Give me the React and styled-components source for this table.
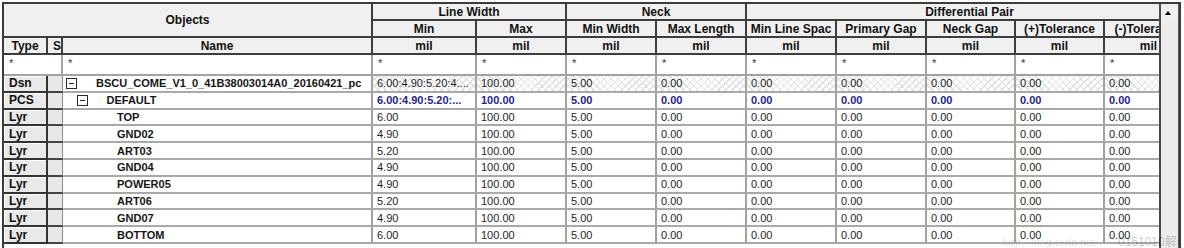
import React from 'react';
import styled, { createGlobalStyle } from 'styled-components';

const GlobalStyle = createGlobalStyle`
  body {
    margin: 0;
    background: #ffffff;
    font-family: "Liberation Sans", Arial, sans-serif;
  }
`;

const Frame = styled.div`
  position: relative;
  margin: 2px 0 0 2px;
  width: 1179px;
  height: 246px;
  box-sizing: border-box;
  border: 2px solid #3c3c3c;
  border-bottom: none;
  display: flex;
  background: #fff;
  overflow: hidden;
`;

const Viewport = styled.div`
  width: 1155px;
  flex: none;
  overflow: hidden;
`;

const Grid = styled.div`
  display: grid;
  grid-template-columns: 44px 15px 310px 104px 90px 90px 90px 90px 90px 89px 89px 89px;
  grid-template-rows: 17px 17px 17px 21px repeat(10, 16.8px);
  width: max-content;
  color: #1a1a1a;
`;

const HeadCell = styled.div`
  grid-column: span ${p => p.$span || 1};
  grid-row: span ${p => p.$rows || 1};
  box-sizing: border-box;
  background: #f0f0f0;
  border-right: 2px solid #3d3d3d;
  border-bottom: 2px solid #3d3d3d;
  font-size: 12px;
  font-weight: bold;
  color: #111;
  display: flex;
  align-items: center;
  justify-content: ${p => (p.$left ? 'flex-start' : 'center')};
  padding-left: ${p => (p.$left ? '5px' : '0')};
  white-space: nowrap;
  overflow: hidden;
`;

const FilterCell = styled.div`
  grid-column: span ${p => p.$span || 1};
  box-sizing: border-box;
  background: #fff;
  border-right: 2px solid #a2a2a2;
  border-bottom: 2px solid #a2a2a2;
  font-size: 11px;
  color: #333;
  padding: 3px 0 0 5px;
  line-height: 11px;
`;

const TypeCell = styled.div`
  box-sizing: border-box;
  background: #e9e9e9;
  border-right: 2px solid #333;
  border-bottom: 2px solid #333;
  box-shadow: inset 1px 1px 0 #ffffff;
  font-size: 12px;
  font-weight: bold;
  color: #111;
  display: flex;
  align-items: center;
  padding-left: 5px;
`;

const StateCell = styled.div`
  box-sizing: border-box;
  background: #e8e8e8;
  border-right: 1px solid #8c8c8c;
  border-bottom: 2px solid #444;
`;

const NameCell = styled.div`
  box-sizing: border-box;
  background: #fff;
  border-right: 2px solid #a2a2a2;
  border-bottom: 2px solid #a9a9a9;
  display: flex;
  align-items: center;
  padding-left: ${p => 3 + p.$level * 10.5}px;
  font-size: 11px;
  font-weight: bold;
  color: #161616;
  white-space: nowrap;
  overflow: hidden;
`;

const TreeSlot = styled.span`
  width: 30px;
  flex: none;
  display: flex;
  align-items: center;
`;

const TreeBox = styled.span`
  position: relative;
  width: 11px;
  height: 11px;
  box-sizing: border-box;
  border: 1px solid #2a2a2a;
  background: #fff;

  &::after {
    content: '';
    position: absolute;
    left: 2px;
    right: 2px;
    top: 4px;
    height: 1px;
    background: #222;
  }
`;

const ValueCell = styled.div`
  box-sizing: border-box;
  border-right: 2px solid #a2a2a2;
  border-bottom: 2px solid #a9a9a9;
  display: flex;
  align-items: center;
  padding-left: 4px;
  font-size: 11px;
  font-weight: ${p => (p.$strong ? 'bold' : 'normal')};
  color: ${p => (p.$strong ? '#25258f' : '#1e1e1e')};
  white-space: nowrap;
  overflow: hidden;
  background-color: #fff;
  background-image: ${p => (p.$hatch
    ? `repeating-linear-gradient(45deg, transparent 0 4px, #e0e0e0 4px 5px),
       repeating-linear-gradient(-45deg, transparent 0 4px, #e0e0e0 4px 5px)`
    : 'none')};
`;

const ScrollBar = styled.div`
  flex: 1;
  box-sizing: border-box;
  background: #ececec;
  border-left: 2px solid #4a4a4a;
  border-right: 1px solid #5a5a5a;
  display: flex;
  flex-direction: column;
`;

const ArrowButton = styled.div`
  height: 17px;
  display: flex;
  align-items: center;
  justify-content: center;
  padding-right: 3px;
  background: #efefef;

  &::before {
    content: '';
    border-left: 3px solid transparent;
    border-right: 3px solid transparent;
    border-bottom: 4px solid #000;
  }
`;

const Watermark = styled.div`
  position: absolute;
  left: 998px;
  top: 228px;
  font-family: "Liberation Serif", serif;
  font-size: 12px;
  color: rgba(0, 0, 0, 0.12);
  white-space: nowrap;
  pointer-events: none;

  span {
    color: rgba(0, 0, 0, 0.22);
    font-family: "Liberation Sans", "Noto Sans CJK SC", sans-serif;
    margin-left: 20px;
  }
`;

const subHeads = ['Min', 'Max', 'Min Width', 'Max Length', 'Min Line Spac', 'Primary Gap', 'Neck Gap', '(+)Tolerance', '(-)Tolerance'];

const zeros = ['0.00', '0.00', '0.00', '0.00', '0.00', '0.00'];

const rows = [
  { type: 'Dsn', level: 0, box: true, name: 'BSCU_COME_V1_0_41B38003014A0_20160421_pc', min: '6.00:4.90:5.20:4....', hatch: true },
  { type: 'PCS', level: 1, box: true, name: 'DEFAULT', min: '6.00:4.90:5.20:...', strong: true },
  { type: 'Lyr', level: 2, name: 'TOP', min: '6.00' },
  { type: 'Lyr', level: 2, name: 'GND02', min: '4.90' },
  { type: 'Lyr', level: 2, name: 'ART03', min: '5.20' },
  { type: 'Lyr', level: 2, name: 'GND04', min: '4.90' },
  { type: 'Lyr', level: 2, name: 'POWER05', min: '4.90' },
  { type: 'Lyr', level: 2, name: 'ART06', min: '5.20' },
  { type: 'Lyr', level: 2, name: 'GND07', min: '4.90' },
  { type: 'Lyr', level: 2, name: 'BOTTOM', min: '6.00' },
];

export default function App() {
  return (
    <>
      <GlobalStyle />
      <Frame>
        <Viewport>
          <Grid>
            <HeadCell $span={3} $rows={2}>Objects</HeadCell>
            <HeadCell $span={2}>Line Width</HeadCell>
            <HeadCell $span={2}>Neck</HeadCell>
            <HeadCell $span={5}>Differential Pair</HeadCell>
            {subHeads.map((h, i) => <HeadCell key={'s' + i}>{h}</HeadCell>)}

            <HeadCell>Type</HeadCell>
            <HeadCell $left>S</HeadCell>
            <HeadCell>Name</HeadCell>
            {subHeads.map((h, i) => <HeadCell key={'u' + i}>mil</HeadCell>)}

            <FilterCell $span={2}>*</FilterCell>
            <FilterCell>*</FilterCell>
            {subHeads.map((h, i) => <FilterCell key={'f' + i}>*</FilterCell>)}

            {rows.map((r, ri) => {
              const values = [r.min, '100.00', '5.00', ...zeros];
              return (
                <React.Fragment key={ri}>
                  <TypeCell>{r.type}</TypeCell>
                  <StateCell />
                  <NameCell $level={r.level}>
                    <TreeSlot>{r.box && <TreeBox />}</TreeSlot>
                    {r.name}
                  </NameCell>
                  {values.map((v, vi) => (
                    <ValueCell key={vi} $hatch={r.hatch} $strong={r.strong}>{v}</ValueCell>
                  ))}
                </React.Fragment>
              );
            })}
          </Grid>
        </Viewport>
        <ScrollBar>
          <ArrowButton />
        </ScrollBar>
        <Watermark>http://blog.csdn.net/<span>0151010解释</span></Watermark>
      </Frame>
    </>
  );
}
